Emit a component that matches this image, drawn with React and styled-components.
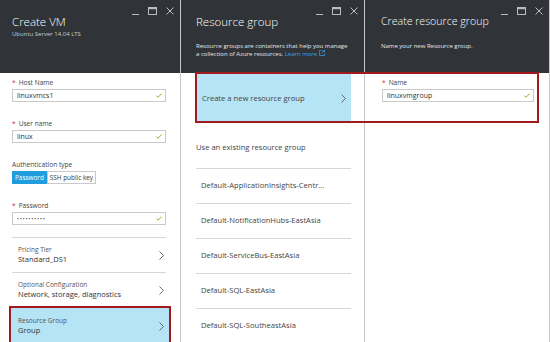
import React from 'react';
import styled, { createGlobalStyle } from 'styled-components';

const GlobalStyle = createGlobalStyle`
  html, body {
    margin: 0;
    padding: 0;
    background: #ffffff;
    font-family: "Open Sans", "Liberation Sans", sans-serif;
    color: #333;
  }
`;

const Stage = styled.div`
  position: relative;
  width: 550px;
  height: 342px;
  overflow: hidden;
  display: grid;
  grid-template-columns: 181px 184px 185px;
`;

const Blade = styled.section`
  display: flex;
  flex-direction: column;
  border-right: 1px solid #c8c8c8;
  background: #fff;
  min-width: 0;
`;

const Header = styled.header`
  height: 73px;
  box-sizing: border-box;
  background: #303438;
  padding: 7px 12px 0 ${p => p.$indent || 12}px;
  display: flex;
  flex-direction: column;
  flex-shrink: 0;
`;

const Controls = styled.div`
  display: flex;
  justify-content: flex-end;
  align-items: flex-end;
  gap: 9px;
  height: 8px;
  margin-right: -6px;
`;

const Title = styled.h1`
  margin: 0;
  font-size: ${p => p.$size || 11}px;
  line-height: 13px;
  font-weight: 300;
  color: #fff;
  white-space: nowrap;
`;

const Subtitle = styled.div`
  margin-top: 3px;
  font-size: 6px;
  line-height: 7px;
  color: #c8ccd0;
`;

const Description = styled.p`
  margin: 14px -10px 0 0;
  font-size: 6px;
  line-height: 8px;
  color: #e6e8ea;
  white-space: nowrap;
`;

const Link = styled.span`
  color: #3ba3e6;
`;

const Body = styled.div`
  flex: 1;
  padding: ${p => p.$pad};
  display: flex;
  flex-direction: column;
`;

const Field = styled.div`
  display: flex;
  flex-direction: column;
  margin-bottom: ${p => p.$gap ?? 17}px;
`;

const Label = styled.label`
  font-size: 6.6px;
  line-height: 9px;
  color: #444;
  margin-bottom: 2px;
`;

const Star = styled.span`
  color: #d0303a;
  margin-right: 3px;
`;

const Input = styled.div`
  height: 13px;
  box-sizing: border-box;
  border: 1px solid #c9c9c9;
  display: flex;
  align-items: center;
  justify-content: space-between;
  padding: 0 3px 0 4px;
  font-size: 7px;
  color: #333;
`;

const Dots = styled.span`
  font-size: 5px;
  letter-spacing: 1px;
`;

const Toggle = styled.div`
  display: flex;
  height: 13px;
`;

const ToggleOption = styled.div`
  display: flex;
  align-items: center;
  box-sizing: border-box;
  padding: 0 2px;
  font-size: 6.4px;
  background: ${p => (p.$active ? '#1f9ddc' : '#fff')};
  color: ${p => (p.$active ? '#fff' : '#333')};
  border: 1px solid ${p => (p.$active ? '#1f9ddc' : '#c9c9c9')};
`;

const MenuItem = styled.div`
  display: flex;
  align-items: center;
  justify-content: space-between;
  box-sizing: border-box;
  height: ${p => p.$h || 35}px;
  border-top: ${p => (p.$flat ? 'none' : '1px solid #d6d6d6')};
  background: ${p => (p.$selected ? '#b4e4f6' : 'transparent')};
  outline: ${p => (p.$marked ? '2px solid #a01a1e' : 'none')};
  outline-offset: -1px;
  margin: ${p => (p.$marked ? '0 -4px 0 -2px' : '0')};
  padding-left: ${p => (p.$marked ? 8 : 6)}px;
  padding-right: ${p => (p.$marked ? 6 : 2)}px;
`;

const MenuText = styled.div`
  display: flex;
  flex-direction: column;
`;

const MenuLabel = styled.div`
  font-size: 6.5px;
  line-height: 8px;
  color: #555;
`;

const MenuValue = styled.div`
  font-size: 7.5px;
  line-height: 11px;
  color: #333;
  white-space: nowrap;
`;

const SectionLabel = styled.div`
  font-size: 7.6px;
  line-height: 10px;
  color: #444;
  padding: 20px 0 16px;
`;

const ListItem = styled.div`
  height: 35px;
  box-sizing: border-box;
  border-top: 1px solid #d6d6d6;
  display: flex;
  align-items: center;
  padding: 0 5px 2px;
  font-size: 7.6px;
  color: #444;
  white-space: nowrap;
`;

const CreateItem = styled.div`
  height: 48px;
  margin: 1px 0 0 1px;
  background: #b4e4f6;
  display: flex;
  align-items: center;
  justify-content: space-between;
  padding: 0 5px;
  font-size: 7.6px;
  color: #444;
`;

const Highlight = styled.div`
  position: absolute;
  left: 195px;
  top: 72px;
  width: 344px;
  height: 51px;
  box-sizing: border-box;
  border: 2px solid #a01a1e;
  pointer-events: none;
`;

const WindowControls = () => (
  <Controls>
    <svg width="7" height="8" viewBox="0 0 7 8">
      <line x1="0" y1="7.5" x2="7" y2="7.5" stroke="#b9bdc1" strokeWidth="1" />
    </svg>
    <svg width="9" height="8" viewBox="0 0 9 8">
      <rect x="0.5" y="0.5" width="8" height="7" fill="none" stroke="#b9bdc1" strokeWidth="1" />
      <line x1="0" y1="1.5" x2="9" y2="1.5" stroke="#b9bdc1" strokeWidth="1.5" />
    </svg>
    <svg width="8" height="8" viewBox="0 0 8 8">
      <path d="M0.5 0.5 L7.5 7.5 M7.5 0.5 L0.5 7.5" stroke="#b9bdc1" strokeWidth="1" />
    </svg>
  </Controls>
);

const Check = () => (
  <svg width="6" height="5" viewBox="0 0 6 5">
    <polyline points="0.5,2.6 2.2,4.2 5.5,0.6" fill="none" stroke="#86b92a" strokeWidth="1" />
  </svg>
);

const Chevron = () => (
  <svg width="5" height="9" viewBox="0 0 5 9">
    <polyline points="0.5,0.5 4.5,4.5 0.5,8.5" fill="none" stroke="#5a5a5a" strokeWidth="0.9" />
  </svg>
);

const External = () => (
  <svg width="6" height="6" viewBox="0 0 6 6" style={{ marginLeft: 2 }}>
    <path d="M2.5 0.5 H0.5 V5.5 H5.5 V3.5 M3.5 0.5 H5.5 V2.5 M5.5 0.5 L2.5 3.5" fill="none" stroke="#3ba3e6" strokeWidth="0.7" />
  </svg>
);

const groups = [
  'Default-ApplicationInsights-Centr...',
  'Default-NotificationHubs-EastAsia',
  'Default-ServiceBus-EastAsia',
  'Default-SQL-EastAsia',
  'Default-SQL-SoutheastAsia',
];

export default function App() {
  return (
    <>
      <GlobalStyle />
      <Stage>
        <Blade>
          <Header>
            <WindowControls />
            <Title $size={11.5}>Create VM</Title>
            <Subtitle>Ubuntu Server 14.04 LTS</Subtitle>
          </Header>
          <Body $pad="5px 14px 0 12px">
            <Field>
              <Label><Star>*</Star>Host Name</Label>
              <Input>linuxvmcs1<Check /></Input>
            </Field>
            <Field>
              <Label><Star>*</Star>User name</Label>
              <Input>linux<Check /></Input>
            </Field>
            <Field>
              <Label>Authentication type</Label>
              <Toggle>
                <ToggleOption $active>Password</ToggleOption>
                <ToggleOption>SSH public key</ToggleOption>
              </Toggle>
            </Field>
            <Field $gap={12}>
              <Label><Star>*</Star>Password</Label>
              <Input><Dots>••••••••••</Dots><Check /></Input>
            </Field>
            <MenuItem>
              <MenuText>
                <MenuLabel>Pricing Tier</MenuLabel>
                <MenuValue>Standard_DS1</MenuValue>
              </MenuText>
              <Chevron />
            </MenuItem>
            <MenuItem>
              <MenuText>
                <MenuLabel>Optional Configuration</MenuLabel>
                <MenuValue>Network, storage, diagnostics</MenuValue>
              </MenuText>
              <Chevron />
            </MenuItem>
            <MenuItem $selected $marked $flat $h={38}>
              <MenuText>
                <MenuLabel>Resource Group</MenuLabel>
                <MenuValue>Group</MenuValue>
              </MenuText>
              <Chevron />
            </MenuItem>
          </Body>
        </Blade>

        <Blade>
          <Header $indent={15}>
            <WindowControls />
            <Title $size={11.5}>Resource group</Title>
            <Description>
              Resource groups are containers that help you manage
              <br />
              a collection of Azure resources. <Link>Learn more<External /></Link>
            </Description>
          </Header>
          <Body $pad="0 13px 0 15px">
            <CreateItem>
              Create a new resource group
              <Chevron />
            </CreateItem>
            <SectionLabel>Use an existing resource group</SectionLabel>
            {groups.map(g => (
              <ListItem key={g}>{g}</ListItem>
            ))}
          </Body>
        </Blade>

        <Blade>
          <Header $indent={16}>
            <WindowControls />
            <Title $size={10.6}>Create resource group</Title>
            <Description>Name your new Resource group.</Description>
          </Header>
          <Body $pad="5px 15px 0 17px">
            <Field>
              <Label><Star>*</Star>Name</Label>
              <Input>linuxvmgroup<Check /></Input>
            </Field>
          </Body>
        </Blade>

        <Highlight />
      </Stage>
    </>
  );
}
